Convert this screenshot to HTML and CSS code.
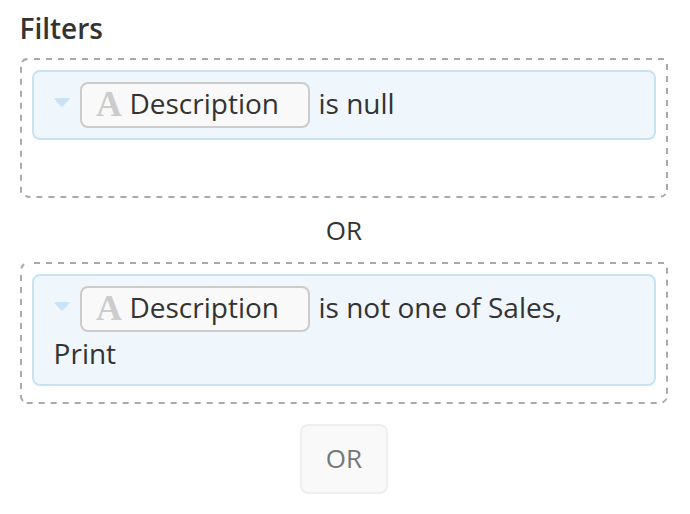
FILE: index.html
```html
<!DOCTYPE html>
<html lang="en">
<head>
<meta charset="utf-8">
<title>Filters</title>
<link rel="stylesheet" href="styles.css">
</head>
<body>
<main class="filters">
  <h1 class="title">Filters</h1>
  <section class="group group-first">
    <svg class="outline" viewBox="0 0 648 140">
      <path class="dash" d="M14 1H644M647 6V132M16.4 139H635M1 8.7V135"/>
      <path class="corner" d="M2.2 4Q4 1 7.5 1M641 138.7Q644 138 645.5 136M5.5 137.7Q7 139 10.5 139"/>
    </svg>
    <div class="rule"><svg class="caret" viewBox="0 0 16 9"><path d="M.8 0H15.2Q16 .5 15.4 1.3L9 8.3Q8 9 7 8.3L.6 1.3Q0 .5 .8 0Z"/></svg><span class="field"><span class="type">A</span><span>Description</span></span><span class="condition">is null</span></div>
  </section>
  <div class="joiner">OR</div>
  <section class="group group-second">
    <svg class="outline" viewBox="0 0 648 142">
      <path class="dash" d="M14 1H644M647 5.7V132M6.7 141H637M1 13V127"/>
      <path class="corner" d="M1.3 6.5Q2 4 4 2M642.5 140.5Q645.5 139 646.5 136.5M1 133V135Q1 137 3 139"/>
    </svg>
    <div class="rule"><svg class="caret" viewBox="0 0 16 9"><path d="M.8 0H15.2Q16 .5 15.4 1.3L9 8.3Q8 9 7 8.3L.6 1.3Q0 .5 .8 0Z"/></svg><span class="field"><span class="type">A</span><span>Description</span></span><span class="condition">is not one of Sales,</span> <span>Print</span></div>
  </section>
  <button class="add">OR</button>
</main>
</body>
</html>
```
FILE: styles.css
```css
* { box-sizing: border-box; }
body { margin: 0; background: #fff; color: #333; font-family: "Open Sans", sans-serif; font-size: 28px; }
.filters { width: 690px; height: 514px; padding: 8px 22px 0 20px; }
.title { margin: 0 0 0 -.5px; height: 50px; font-size: 28px; line-height: 40px; font-weight: 600; }
.group { position: relative; padding: 12px; }
.group-first { height: 140px; }
.group-second { height: 142px; }
.outline { position: absolute; inset: 0; width: 100%; height: 100%; }
.dash, .corner { fill: none; stroke: #aaa; stroke-width: 2; }
.dash { stroke-dasharray: 6 6; }
.rule { position: relative; padding: 10px 36px 10px 19.6px; line-height: 42px; border: 2px solid #c9e2f3; border-radius: 8px; background: #eff6fc; }
.caret { width: 16px; height: 9px; margin-right: 10.4px; vertical-align: 7px; fill: #c9e2f5; }
.field { display: inline-block; width: 230px; height: 46px; padding-left: 14px; margin-right: 8.5px; border: 2px solid #ccc; border-radius: 8px; background: #f9f9f9; line-height: 38px; vertical-align: top; }
.type { display: inline-block; width: 33.5px; color: #ccc; font: bold 36px/40px "Liberation Serif", serif; vertical-align: top; }
.joiner { height: 64px; line-height: 64px; text-align: center; font-size: 26px; }
.add { display: block; width: 88px; height: 70px; margin: 20px auto 0; padding: 0 0 2px; border: 2px solid #eee; border-radius: 8px; background: #f9f9f9; color: #777; font: 26px "Open Sans", sans-serif; }
```
